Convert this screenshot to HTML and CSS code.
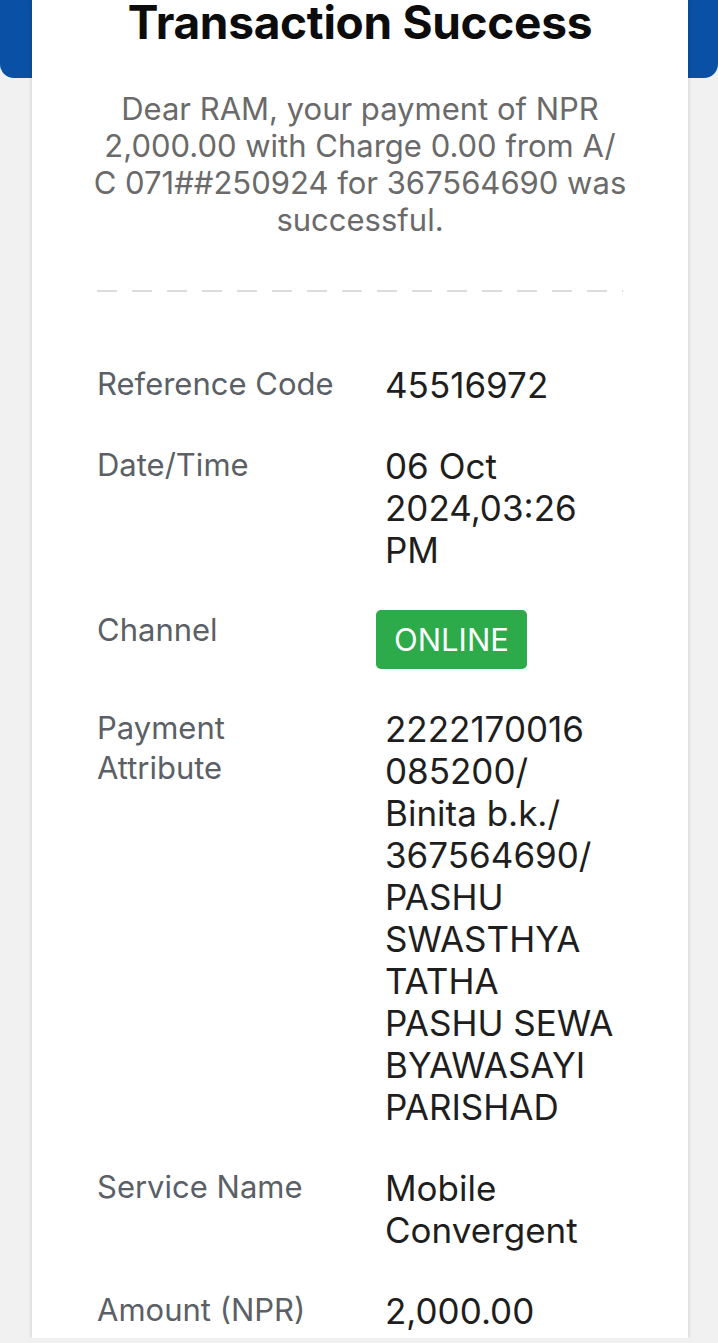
FILE: index.html
```html
<!DOCTYPE html>
<html lang="en">
<head>
    <meta charset="UTF-8">
    <title>Transaction Success</title>
    <link rel="stylesheet" href="styles.css">
</head>
<body>
<div class="top-band"></div>
<!-- receipt card -->
<div class="receipt">
    <h1 class="receipt-title">Transaction Success</h1>
    <p class="receipt-msg">Dear RAM, your payment of NPR<br>2,000.00 with Charge 0.00 from A/<br>C 071##250924 for 367564690 was<br>successful.</p>
    <div class="divider"></div>
    <div class="details">
        <div class="lbl">Reference Code</div>
        <div class="val">45516972</div>

        <div class="lbl">Date/Time</div>
        <div class="val">06 Oct<br>2024,03:26<br>PM</div>

        <div class="lbl">Channel</div>
        <div class="val"><span class="badge">ONLINE</span></div>

        <div class="lbl">Payment<br>Attribute</div>
        <div class="val">2222170016<br>085200/<br>Binita b.k./<br>367564690/<br>PASHU<br>SWASTHYA<br>TATHA<br>PASHU SEWA<br>BYAWASAYI<br>PARISHAD</div>

        <div class="lbl">Service Name</div>
        <div class="val">Mobile<br>Convergent</div>

        <div class="lbl">Amount (NPR)</div>
        <div class="val">2,000.00</div>
    </div>
</div>
</body>
</html>
```
FILE: styles.css
```css
html, body {margin:0;padding:0;}
body {background:#f2f1f2;font-family:Inter, "Noto Sans", sans-serif;}

.top-band {height:78px;background:#0a50a5;border-radius:0 0 14px 14px;}

.receipt {margin:-78px 30px 0 32px;background:#fff;box-shadow:0 0 4px rgba(0,0,0,0.18);
    height:1338px;box-sizing:border-box;}

.receipt-title {margin:0;font-family:Inter, Roboto, sans-serif;font-weight:700;font-size:46px;
    line-height:44px;text-align:center;color:#0c0c0c;letter-spacing:-0.3px;}

.receipt-msg {margin:46px 0 0;font-size:31px;line-height:37px;text-align:center;color:#6a6a6a;}

.divider {margin:52px 0 0 65px;width:526px;height:2px;
    background:repeating-linear-gradient(to right, #dcdcdc 0 20px, transparent 20px 35px);}

.details {display:grid;grid-template-columns:288px 1fr;row-gap:39px;margin-top:72px;padding-left:65px;}
.lbl {font-size:31px;line-height:40px;color:#5b5f66;}
.val {font-size:35px;line-height:42px;color:#1e1e1e;}

.badge {display:inline-block;margin-left:-9px;padding:0 18px;height:59px;line-height:59px;border-radius:5px;
    background:#2daa4a;color:#fff;font-size:31px;vertical-align:top;}
```
